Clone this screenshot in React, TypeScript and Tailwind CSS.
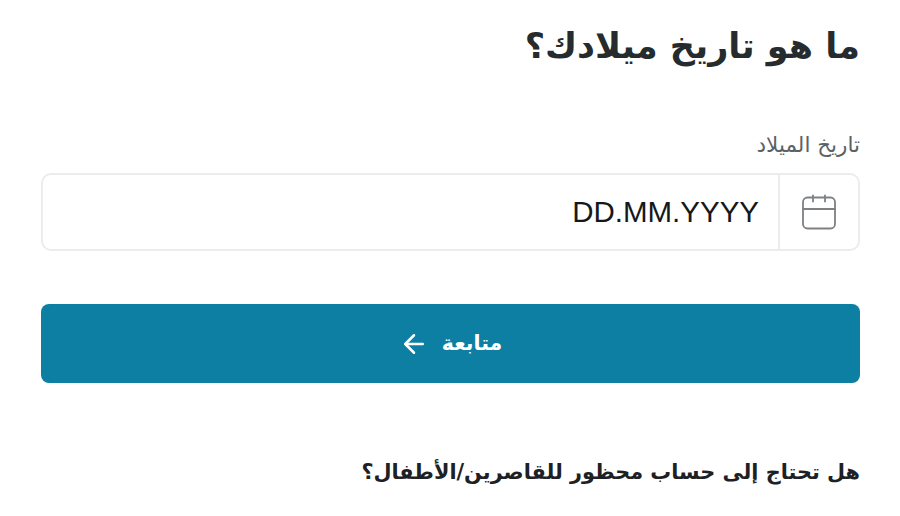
import React from "react";
import { ArrowLeft } from "lucide-react";

export default function App() {
  return (
    <div dir="rtl" className="w-[900px] h-[516px] overflow-hidden bg-white pt-[22px] pl-[41px] pr-[40px] font-['Liberation_Sans',sans-serif]">
      <h1 className="text-[35px] leading-[48px] font-bold text-[#262b2e] font-['DejaVu_Sans',sans-serif]">ما هو تاريخ ميلادك؟</h1>
      <label className="block mt-[61px] text-[21.5px] leading-[28px] text-[#5b6266] font-['DejaVu_Sans',sans-serif]">تاريخ الميلاد</label>
      <div className="mt-[14px] h-[78px] flex items-stretch border-2 border-[#ebecec] rounded-[10px] bg-white">
        <div className="w-[80px] flex items-center justify-center border-l-2 border-[#ebecec] text-[#7d8183]">
          <svg width="36" height="36" viewBox="0 0 36 36" fill="none" stroke="currentColor" strokeWidth="1.8" strokeLinecap="round" strokeLinejoin="round">
            <rect x="2" y="3.5" width="32" height="31" rx="4.5" />
            <path d="M2 15h32M12 1.5v6M24 1.5v6" />
          </svg>
        </div>
        <div className="flex-1 flex items-center pr-[19px] text-[29.5px] text-[#15181a]">DD.MM.YYYY</div>
      </div>
      <button className="mt-[53px] w-full h-[79px] rounded-[8px] bg-[#0c7fa2] text-white flex items-center justify-center gap-[13px] text-[20.5px] font-bold font-['DejaVu_Sans',sans-serif]">
        <span>متابعة</span>
        <ArrowLeft size={30} strokeWidth={2} />
      </button>
      <p className="mt-[73px] text-[20.8px] leading-[32px] font-bold text-[#1d2124] font-['DejaVu_Sans',sans-serif]">هل تحتاج إلى حساب محظور للقاصرين/الأطفال؟</p>
    </div>
  );
}
